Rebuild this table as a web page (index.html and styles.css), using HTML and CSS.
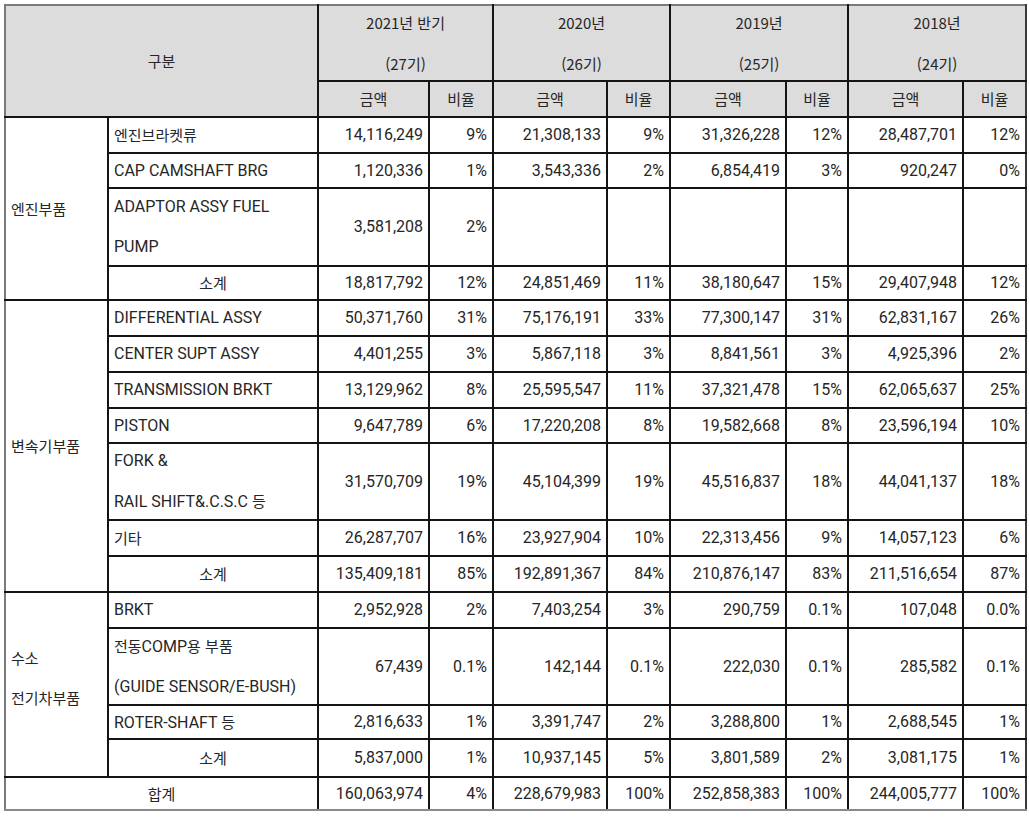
FILE: index.html
```html
<!DOCTYPE html>
<html lang="ko">
<head>
<meta charset="utf-8">
<title>매출 현황</title>
<link rel="stylesheet" href="styles.css">
</head>
<body>
<table class="sales">
  <colgroup>
    <col class="c-cat"><col class="c-item">
    <col class="c-amt1"><col class="c-rat1">
    <col class="c-amt2"><col class="c-rat2">
    <col class="c-amt3"><col class="c-rat3">
    <col class="c-amt4"><col class="c-rat4">
  </colgroup>
  <thead>
    <tr class="h-year">
      <th class="ko edge-l edge-t" rowspan="2" colspan="2">구분</th>
      <th class="ko two edge-t" colspan="2"><span class="ln">2021년 반기</span><span class="ln">(27기)</span></th>
      <th class="ko two edge-t" colspan="2"><span class="ln">2020년</span><span class="ln">(26기)</span></th>
      <th class="ko two edge-t" colspan="2"><span class="ln">2019년</span><span class="ln">(25기)</span></th>
      <th class="ko two edge-t edge-r" colspan="2"><span class="ln">2018년</span><span class="ln">(24기)</span></th>
    </tr>
    <tr class="h-sub">
      <th class="ko">금액</th><th class="ko">비율</th>
      <th class="ko">금액</th><th class="ko">비율</th>
      <th class="ko">금액</th><th class="ko">비율</th>
      <th class="ko">금액</th><th class="ko edge-r">비율</th>
    </tr>
  </thead>
  <tbody>
    <tr class="r36">
      <td class="cat ko edge-l" rowspan="4">엔진부품</td>
      <td class="item ko">엔진브라켓류</td>
      <td class="num">14,116,249</td><td class="num">9%</td>
      <td class="num">21,308,133</td><td class="num">9%</td>
      <td class="num">31,326,228</td><td class="num">12%</td>
      <td class="num">28,487,701</td><td class="num edge-r">12%</td>
    </tr>
    <tr class="r35">
      <td class="item">CAP CAMSHAFT BRG</td>
      <td class="num">1,120,336</td><td class="num">1%</td>
      <td class="num">3,543,336</td><td class="num">2%</td>
      <td class="num">6,854,419</td><td class="num">3%</td>
      <td class="num">920,247</td><td class="num edge-r">0%</td>
    </tr>
    <tr class="r78">
      <td class="item two"><span class="ln">ADAPTOR ASSY FUEL</span><span class="ln">PUMP</span></td>
      <td class="num">3,581,208</td><td class="num">2%</td>
      <td class="num"></td><td class="num"></td>
      <td class="num"></td><td class="num"></td>
      <td class="num"></td><td class="num edge-r"></td>
    </tr>
    <tr class="r34">
      <td class="sub ko">소계</td>
      <td class="num">18,817,792</td><td class="num">12%</td>
      <td class="num">24,851,469</td><td class="num">11%</td>
      <td class="num">38,180,647</td><td class="num">15%</td>
      <td class="num">29,407,948</td><td class="num edge-r">12%</td>
    </tr>

    <tr class="r36">
      <td class="cat ko edge-l" rowspan="7">변속기부품</td>
      <td class="item">DIFFERENTIAL ASSY</td>
      <td class="num">50,371,760</td><td class="num">31%</td>
      <td class="num">75,176,191</td><td class="num">33%</td>
      <td class="num">77,300,147</td><td class="num">31%</td>
      <td class="num">62,831,167</td><td class="num edge-r">26%</td>
    </tr>
    <tr class="r36">
      <td class="item">CENTER SUPT ASSY</td>
      <td class="num">4,401,255</td><td class="num">3%</td>
      <td class="num">5,867,118</td><td class="num">3%</td>
      <td class="num">8,841,561</td><td class="num">3%</td>
      <td class="num">4,925,396</td><td class="num edge-r">2%</td>
    </tr>
    <tr class="r36">
      <td class="item">TRANSMISSION BRKT</td>
      <td class="num">13,129,962</td><td class="num">8%</td>
      <td class="num">25,595,547</td><td class="num">11%</td>
      <td class="num">37,321,478</td><td class="num">15%</td>
      <td class="num">62,065,637</td><td class="num edge-r">25%</td>
    </tr>
    <tr class="r35">
      <td class="item">PISTON</td>
      <td class="num">9,647,789</td><td class="num">6%</td>
      <td class="num">17,220,208</td><td class="num">8%</td>
      <td class="num">19,582,668</td><td class="num">8%</td>
      <td class="num">23,596,194</td><td class="num edge-r">10%</td>
    </tr>
    <tr class="r77">
      <td class="item two"><span class="ln">FORK &amp;</span><span class="ln">RAIL SHIFT&amp;.C.S.C <span class="ko">등</span></span></td>
      <td class="num">31,570,709</td><td class="num">19%</td>
      <td class="num">45,104,399</td><td class="num">19%</td>
      <td class="num">45,516,837</td><td class="num">18%</td>
      <td class="num">44,041,137</td><td class="num edge-r">18%</td>
    </tr>
    <tr class="r36">
      <td class="item ko">기타</td>
      <td class="num">26,287,707</td><td class="num">16%</td>
      <td class="num">23,927,904</td><td class="num">10%</td>
      <td class="num">22,313,456</td><td class="num">9%</td>
      <td class="num">14,057,123</td><td class="num edge-r">6%</td>
    </tr>
    <tr class="r36">
      <td class="sub ko">소계</td>
      <td class="num">135,409,181</td><td class="num">85%</td>
      <td class="num">192,891,367</td><td class="num">84%</td>
      <td class="num">210,876,147</td><td class="num">83%</td>
      <td class="num">211,516,654</td><td class="num edge-r">87%</td>
    </tr>

    <tr class="r36">
      <td class="cat ko two edge-l" rowspan="4"><span class="lift"><span class="ln">수소</span><span class="ln">전기차부품</span></span></td>
      <td class="item">BRKT</td>
      <td class="num">2,952,928</td><td class="num">2%</td>
      <td class="num">7,403,254</td><td class="num">3%</td>
      <td class="num">290,759</td><td class="num">0.1%</td>
      <td class="num">107,048</td><td class="num edge-r">0.0%</td>
    </tr>
    <tr class="r77">
      <td class="item two"><span class="ln"><span class="ko">전동</span>COMP<span class="ko">용 부품</span></span><span class="ln">(GUIDE SENSOR/E-BUSH)</span></td>
      <td class="num">67,439</td><td class="num">0.1%</td>
      <td class="num">142,144</td><td class="num">0.1%</td>
      <td class="num">222,030</td><td class="num">0.1%</td>
      <td class="num">285,582</td><td class="num edge-r">0.1%</td>
    </tr>
    <tr class="r34">
      <td class="item">ROTER-SHAFT <span class="ko">등</span></td>
      <td class="num">2,816,633</td><td class="num">1%</td>
      <td class="num">3,391,747</td><td class="num">2%</td>
      <td class="num">3,288,800</td><td class="num">1%</td>
      <td class="num">2,688,545</td><td class="num edge-r">1%</td>
    </tr>
    <tr class="r38">
      <td class="sub ko">소계</td>
      <td class="num">5,837,000</td><td class="num">1%</td>
      <td class="num">10,937,145</td><td class="num">5%</td>
      <td class="num">3,801,589</td><td class="num">2%</td>
      <td class="num">3,081,175</td><td class="num edge-r">1%</td>
    </tr>

    <tr class="r33 total">
      <td class="sub ko edge-l edge-b" colspan="2">합계</td>
      <td class="num edge-b">160,063,974</td><td class="num edge-b">4%</td>
      <td class="num edge-b">228,679,983</td><td class="num edge-b">100%</td>
      <td class="num edge-b">252,858,383</td><td class="num edge-b">100%</td>
      <td class="num edge-b">244,005,777</td><td class="num edge-b edge-r">100%</td>
    </tr>
  </tbody>
</table>
</body>
</html>
```

FILE: styles.css
```css
html, body {
  margin: 0;
  padding: 0;
  background: #ffffff;
}

body {
  padding: 4px 0 0 4px;
}

.sales {
  border-collapse: collapse;
  table-layout: fixed;
  width: 1023px;
  font-family: "Roboto", "Noto Sans CJK KR", sans-serif;
  font-size: 16px;
  color: #262626;
}

.c-cat { width: 103px; }
.c-item { width: 210px; }
.c-amt1 { width: 111px; }
.c-rat1 { width: 64px; }
.c-amt2 { width: 114px; }
.c-rat2 { width: 63px; }
.c-amt3 { width: 116px; }
.c-rat3 { width: 62px; }
.c-amt4 { width: 115px; }
.c-rat4 { width: 63px; }

.sales th,
.sales td {
  box-sizing: border-box;
  border: 2px solid #141414;
  padding: 0 5px;
  line-height: 20px;
  vertical-align: middle;
  white-space: nowrap;
  overflow: hidden;
}

.sales th {
  background: #dcdcdc;
  font-weight: normal;
  text-align: center;
}

.ko {
  font-family: "Noto Sans CJK KR", sans-serif;
  font-size: 15px;
}

.ln {
  display: block;
  line-height: 20px;
}

.ln + .ln {
  margin-top: 20px;
}

.h-year .ln + .ln {
  margin-top: 21px;
}

.h-year th { height: 76px; }
.h-sub th { height: 36px; }

.r33 td { height: 33px; }
.r34 td { height: 34px; }
.r35 td { height: 35px; }
.r36 td { height: 36px; }
.r38 td { height: 38px; }
.r77 td { height: 77px; }
.r78 td { height: 78px; }

.cat {
  text-align: left;
  padding-left: 6px;
}

.lift {
  display: block;
  margin-top: -14px;
}

.item {
  text-align: left;
}

.sub {
  text-align: center;
}

.num {
  text-align: right;
  padding-right: 4px;
}

.sales .edge-l { border-left-color: #7a7a7a; }
.sales .edge-t { border-top-color: #7a7a7a; }
.sales .edge-b { border-bottom-color: #8a8a8a; }
.sales .edge-r { border-right-color: #3a3a3a; }
```
